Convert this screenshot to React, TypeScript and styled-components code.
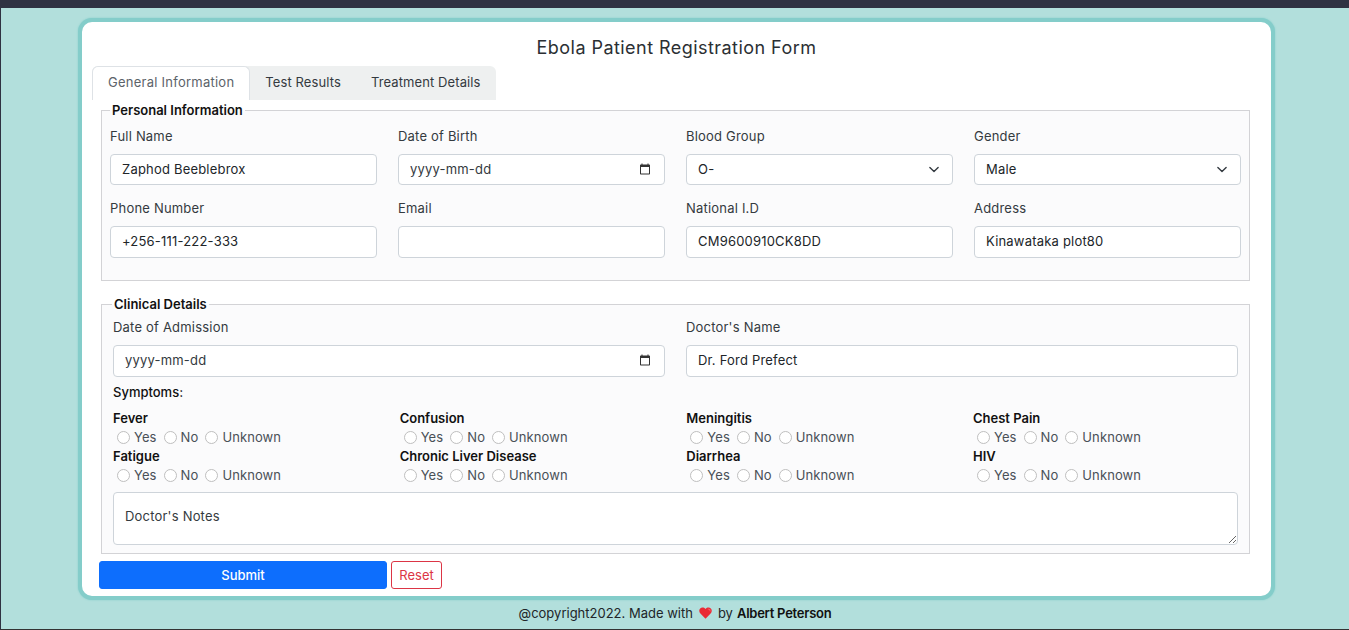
import React from "react";
import styled, { createGlobalStyle } from "styled-components";

const GlobalStyle = createGlobalStyle`
    * { box-sizing: border-box; }
    html, body { margin: 0; padding: 0; }
    body {
        font-family: "Inter", "Noto Sans", sans-serif;
        font-size: 13px;
        color: #212529;
        background: #b2dfdc;
    }
`;

const Page = styled.div`
    position: relative;
    height: 630px;
    overflow: hidden;
    background: #b2dfdc;
    border-left: 1px solid #2f3242;
    border-bottom: 1px solid #333;
`;

const TopBar = styled.div`
    height: 8px;
    background: #2f3242;
`;

const EdgeMark = styled.span<{ $top: number }>`
    position: absolute;
    left: -1px;
    top: ${({ $top }) => $top}px;
    width: 1px;
    height: 6px;
    background: #3d9bf0;
`;

const Card = styled.main`
    width: 1197px;
    height: 582px;
    margin: 10px 0 0 77px;
    padding: 14px 10px 0 10px;
    background: #fff;
    border: 4px solid #84cdca;
    border-radius: 14px;
    box-shadow: 0 0 2px #84cdca;
`;

const Title = styled.h1`
    margin: 0 0 6px;
    height: 24px;
    font-size: 18px;
    line-height: 24px;
    font-weight: 400;
    text-align: center;
    letter-spacing: 0.45px;
    color: #2b2f33;
`;

const Tabs = styled.div`
    display: inline-flex;
    height: 34px;
    background: #eef0f0;
    border-radius: 6px 6px 0 0;
    vertical-align: top;
`;

const Tab = styled.div<{ $active?: boolean }>`
    display: flex;
    align-items: center;
    padding: ${({ $active }) => ($active ? "0 15px 3px" : "1px 15px 4px")};
    font-size: 13px;
    letter-spacing: ${({ $active }) => ($active ? "0.25px" : "0.1px")};
    color: ${({ $active }) => ($active ? "#5c636a" : "#343a40")};
    background: ${({ $active }) => ($active ? "#fff" : "transparent")};
    border: ${({ $active }) => ($active ? "1px solid #dee2e6" : "none")};
    border-bottom: none;
    border-radius: 6px 6px 0 0;
`;

const Section = styled.fieldset<{ $top: number; $height: number }>`
    margin: ${({ $top }) => $top}px 11px 0 9px;
    height: ${({ $height }) => $height}px;
    padding: 0;
    min-width: 0;
    background: #fbfbfc;
    border: 1px solid #d3d3d6;
`;

const Legend = styled.legend<{ $left: number }>`
    margin-left: ${({ $left }) => $left}px;
    padding: 0 2px;
    font-size: 13px;
    line-height: 14px;
    font-weight: 600;
    color: #111;
`;

const FourColumns = styled.div`
    display: grid;
    grid-template-columns: repeat(4, 267px);
    column-gap: 21px;
    row-gap: 14px;
    padding: 10px 0 0 8px;
`;

const TwoColumns = styled.div`
    display: grid;
    grid-template-columns: repeat(2, 552px);
    column-gap: 21px;
    padding: 7px 0 0 11px;
`;

const Field = styled.div`
    display: flex;
    flex-direction: column;
`;

const Label = styled.label`
    height: 18px;
    margin-bottom: 9px;
    font-size: 13px;
    line-height: 18px;
    letter-spacing: 0.2px;
    color: #343a40;
`;

const Input = styled.input<{ $tall?: boolean }>`
    width: 100%;
    height: ${({ $tall }) => ($tall ? 32 : 31)}px;
    padding: 0 11px 2px;
    font-family: inherit;
    font-size: 13px;
    letter-spacing: 0.2px;
    color: #212529;
    background: #fff;
    border: 1px solid #ced4da;
    border-radius: 4px;
    outline: none;
`;

const DateInput = styled(Input)`
    background: #fff url("data:image/svg+xml,%3csvg xmlns='http://www.w3.org/2000/svg' viewBox='0 0 24 24'%3e%3cpath fill='%23333' d='M20 3h-1V1h-2v2H7V1H5v2H4c-1.1 0-2 .9-2 2v16c0 1.1.9 2 2 2h16c1.1 0 2-.9 2-2V5c0-1.1-.9-2-2-2zm0 18H4V8h16v13z'/%3e%3c/svg%3e") no-repeat right 13px top calc(50% - 1px) / 12px 12px;

    &::placeholder {
        color: #343a40;
        opacity: 1;
    }
`;

const Select = styled.select`
    width: 100%;
    height: 31px;
    padding: 0 30px 2px 11px;
    font-family: inherit;
    font-size: 13px;
    letter-spacing: 0.2px;
    color: #212529;
    border: 1px solid #ced4da;
    border-radius: 4px;
    appearance: none;
    outline: none;
    background: #fff url("data:image/svg+xml,%3csvg xmlns='http://www.w3.org/2000/svg' viewBox='0 0 16 16'%3e%3cpath fill='none' stroke='%23343a40' stroke-linecap='round' stroke-linejoin='round' stroke-width='2' d='m2 5 6 6 6-6'/%3e%3c/svg%3e") no-repeat right 10px center / 16px 11px;
`;

const SymptomsHeading = styled.div`
    margin: 0 0 9px 11px;
    padding-top: 6px;
    height: 23px;
    font-size: 13px;
    line-height: 18px;
    font-weight: 500;
    color: #111;
`;

const SymptomGrid = styled.div`
    display: grid;
    grid-template-columns: repeat(4, 286.67px);
    padding-left: 11px;
`;

const Symptom = styled.div`
    height: 38px;
`;

const SymptomName = styled.div`
    height: 18px;
    font-size: 13px;
    line-height: 18px;
    font-weight: 600;
    color: #111;
`;

const RadioRow = styled.div`
    display: flex;
    align-items: center;
    height: 20px;
    padding-left: 4px;
`;

const RadioLabel = styled.label`
    display: flex;
    align-items: center;
    margin-right: 7px;
    font-size: 13px;
    letter-spacing: 0.1px;
    color: #495057;
`;

const Radio = styled.input`
    appearance: none;
    width: 13px;
    height: 13px;
    margin: 1px 4px 0 0;
    background: #fff;
    border: 1px solid #bfbfbf;
    border-radius: 50%;
`;

const Notes = styled.textarea`
    display: block;
    width: 1125px;
    height: 53px;
    margin: 7px 0 0 11px;
    padding: 15px 11px 0;
    font-family: inherit;
    font-size: 13px;
    letter-spacing: 0.2px;
    background: #fff;
    border: 1px solid #ced4da;
    border-radius: 4px;
    outline: none;

    &::placeholder {
        color: #343a40;
        opacity: 1;
    }
`;

const Actions = styled.div`
    display: flex;
    gap: 4px;
    margin: 7px 0 0 7px;
`;

const SubmitButton = styled.button`
    width: 288px;
    height: 28px;
    padding: 0;
    font-family: inherit;
    font-size: 13px;
    font-weight: 500;
    color: #fff;
    background: #0d6efd;
    border: 1px solid #0d6efd;
    border-radius: 3px;
`;

const ResetButton = styled.button`
    width: 51px;
    height: 28px;
    padding: 0;
    font-family: inherit;
    font-size: 13px;
    color: #dc3545;
    background: #fff;
    border: 1px solid #dc3545;
    border-radius: 3px;
`;

const Footer = styled.footer`
    display: flex;
    justify-content: center;
    align-items: center;
    gap: 6px;
    height: 26px;
    font-size: 13px;
    color: #212529;
`;

const Strong = styled.strong`
    margin-left: -2px;
    font-weight: 600;
    letter-spacing: -0.25px;
    color: #111;
`;

const symptoms = [
    "Fever",
    "Confusion",
    "Meningitis",
    "Chest Pain",
    "Fatigue",
    "Chronic Liver Disease",
    "Diarrhea",
    "HIV",
];

const bloodGroups = ["O-", "O+", "A-", "A+", "B-", "B+", "AB-", "AB+"];

export default function App() {
    return (
        <>
            <GlobalStyle />
            <Page>
                <TopBar />
                <EdgeMark $top={107} />
                <EdgeMark $top={252} />
                <EdgeMark $top={360} />
                <Card>
                    <Title>Ebola Patient Registration Form</Title>
                    <Tabs>
                        <Tab $active>General Information</Tab>
                        <Tab>Test Results</Tab>
                        <Tab>Treatment Details</Tab>
                    </Tabs>
                    <Section $top={3} $height={178}>
                        <Legend $left={8}>Personal Information</Legend>
                        <FourColumns>
                            <Field>
                                <Label>Full Name</Label>
                                <Input defaultValue="Zaphod Beeblebrox" />
                            </Field>
                            <Field>
                                <Label>Date of Birth</Label>
                                <DateInput placeholder="yyyy-mm-dd" />
                            </Field>
                            <Field>
                                <Label>Blood Group</Label>
                                <Select defaultValue="O-">
                                    {bloodGroups.map((group) => (
                                        <option key={group}>{group}</option>
                                    ))}
                                </Select>
                            </Field>
                            <Field>
                                <Label>Gender</Label>
                                <Select defaultValue="Male">
                                    <option>Male</option>
                                    <option>Female</option>
                                </Select>
                            </Field>
                            <Field>
                                <Label>Phone Number</Label>
                                <Input $tall defaultValue="+256-111-222-333" />
                            </Field>
                            <Field>
                                <Label>Email</Label>
                                <Input $tall />
                            </Field>
                            <Field>
                                <Label>National I.D</Label>
                                <Input $tall defaultValue="CM9600910CK8DD" />
                            </Field>
                            <Field>
                                <Label>Address</Label>
                                <Input $tall defaultValue="Kinawataka plot80" />
                            </Field>
                        </FourColumns>
                    </Section>
                    <Section $top={16} $height={257}>
                        <Legend $left={10}>Clinical Details</Legend>
                        <TwoColumns>
                            <Field>
                                <Label>Date of Admission</Label>
                                <DateInput $tall placeholder="yyyy-mm-dd" />
                            </Field>
                            <Field>
                                <Label>Doctor's Name</Label>
                                <Input $tall defaultValue="Dr. Ford Prefect" />
                            </Field>
                        </TwoColumns>
                        <SymptomsHeading>Symptoms:</SymptomsHeading>
                        <SymptomGrid>
                            {symptoms.map((name) => (
                                <Symptom key={name}>
                                    <SymptomName>{name}</SymptomName>
                                    <RadioRow>
                                        {["Yes", "No", "Unknown"].map((option) => (
                                            <RadioLabel key={option}>
                                                <Radio type="radio" name={name} />
                                                {option}
                                            </RadioLabel>
                                        ))}
                                    </RadioRow>
                                </Symptom>
                            ))}
                        </SymptomGrid>
                        <Notes placeholder="Doctor's Notes" />
                    </Section>
                    <Actions>
                        <SubmitButton>Submit</SubmitButton>
                        <ResetButton>Reset</ResetButton>
                    </Actions>
                </Card>
                <Footer>
                    <span>@copyright2022. Made with</span>
                    <svg width="13" height="12" viewBox="0 0 24 22" aria-hidden="true">
                        <path
                            fill="#ea2a35"
                            d="M12 21.5 2.6 12C-.2 9.1-.2 5 2.2 2.6 4.8 0 9 .2 12 3.6 15 .2 19.2 0 21.8 2.6c2.4 2.4 2.4 6.5-.4 9.4z"
                        />
                        <path fill="#f8616a" d="M15.5 3.6c1.8-1 4-.8 5 .6s1 3.2 0 4.8c-.4-2.6-2.200-4.600-5-5.400z" />
                    </svg>
                    <span>by</span>
                    <Strong>Albert Peterson</Strong>
                </Footer>
            </Page>
        </>
    );
}
